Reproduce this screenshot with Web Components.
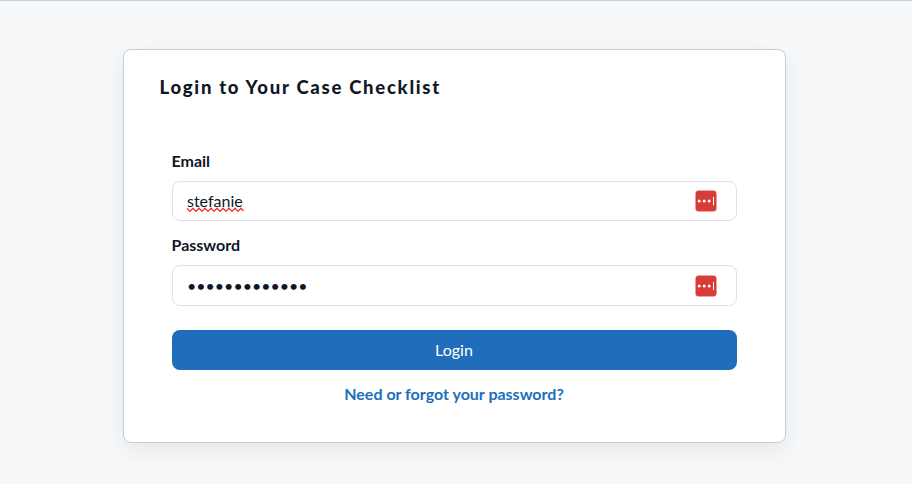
<!DOCTYPE html>
<html lang="en">
<head>
<meta charset="utf-8">
<title>Login</title>
<style>
html,body{margin:0;height:100%}
body{background:#f6f8fa;font-family:Lato,"Liberation Sans",sans-serif;font-size:16px;color:#101828;overflow:hidden}
</style>
</head>
<body>
<login-page></login-page>
<script>
class Base extends HTMLElement {
  constructor() {
    super();
    this.attachShadow({ mode: 'open' }).innerHTML = this.markup();
  }
}

customElements.define('vault-icon', class extends Base {
  markup() {
    return `<style>:host{display:block;width:22px;height:22px;flex:none}svg{display:block}</style>
    <svg width="22" height="22" viewBox="0 0 22 22">
      <rect x=".2" y=".2" width="21.6" height="21.6" rx="3.5" fill="#f0b8b6"/>
      <rect x=".7" y=".7" width="20.6" height="20.6" rx="3" fill="#d83c38"/>
      <g fill="#fff"><circle cx="4.2" cy="11" r="1.5"/><circle cx="9.2" cy="11" r="1.5"/><circle cx="14.2" cy="11" r="1.5"/>
      <rect x="18" y="7" width="1" height="8.2"/></g>
    </svg>`;
  }
});

customElements.define('form-field', class extends Base {
  markup() {
    return `<style>
      :host{display:flex;flex-direction:column;gap:8px}
      .label{font-weight:700;line-height:24px;height:24px;margin-left:-.5px;color:#0f172a}
      .box{box-sizing:border-box;height:var(--box-height,40px);border:1px solid #dfe1e6;border-radius:8px;background:#fff;padding:0 19px 0 14px;display:flex;align-items:center;justify-content:space-between}
    </style>
    <div class="label"><slot name="label"></slot></div>
    <div class="box"><slot></slot><vault-icon></vault-icon></div>`;
  }
});

customElements.define('misspelled-text', class extends Base {
  markup() {
    return `<style>
      :host{display:block;position:relative;line-height:24px}
      svg{position:absolute;left:0;top:18px;display:block}
    </style><slot></slot>
    <svg width="57" height="6" viewBox="0 0 57 6" fill="none" stroke="#ff2a2a" stroke-width="1.3">
      <path d="M0 1.2 L3 4.4 L6 1.2 L9 4.4 L12 1.2 L15 4.4 L18 1.2 L21 4.4 L24 1.2 L27 4.4 L30 1.2 L33 4.4 L36 1.2 L39 4.4 L42 1.2 L45 4.4 L48 1.2 L51 4.4 L54 1.2 L56.5 4"/>
    </svg>`;
  }
});

customElements.define('primary-button', class extends Base {
  markup() {
    return `<style>
      :host{display:block}
      button{display:block;width:100%;height:40px;border:0;border-radius:8px;background:#206ebb;color:#fff;font:inherit;line-height:24px;padding:0 1px 0 0}
    </style><button><slot></slot></button>`;
  }
});

customElements.define('login-card', class extends Base {
  markup() {
    return `<style>
      :host{display:block;box-sizing:border-box;width:663px;height:394px;background:#fff;border:1px solid #c1cde0;border-radius:8px;box-shadow:0 8px 24px rgba(0,0,0,.07);padding:23px 48px 0}
      h1{margin:0 -12.5px;font-size:18.5px;line-height:28px;height:28px;font-weight:900;letter-spacing:1.72px;white-space:nowrap}
      .fields{display:flex;flex-direction:column;gap:12px;margin-top:48px}
      primary-button{margin-top:24px}
      .help{margin-top:12px;margin-right:1px;text-align:center;line-height:24px;font-weight:700;color:#206ebb}
    </style>
    <h1><slot name="title"></slot></h1>
    <div class="fields"><slot></slot></div>
    <primary-button>Login</primary-button>
    <div class="help"><slot name="help"></slot></div>`;
  }
});

customElements.define('login-page', class extends Base {
  markup() {
    return `<style>
      :host{display:flex;box-sizing:border-box;height:100vh;border-top:1px solid #c1cde0;padding:48px 3px 0 0;justify-content:center;align-items:flex-start}
      .pw{--box-height:41px}
      .dots{line-height:24px;white-space:nowrap}
    </style>
    <login-card>
      <span slot="title">Login to Your Case Checklist</span>
      <form-field><span slot="label">Email</span><misspelled-text>stefanie</misspelled-text></form-field>
      <form-field class="pw"><span slot="label">Password</span><span class="dots">•••••••••••••</span></form-field>
      <span slot="help">Need or forgot your password?</span>
    </login-card>`;
  }
});
</script>
</body>
</html>
